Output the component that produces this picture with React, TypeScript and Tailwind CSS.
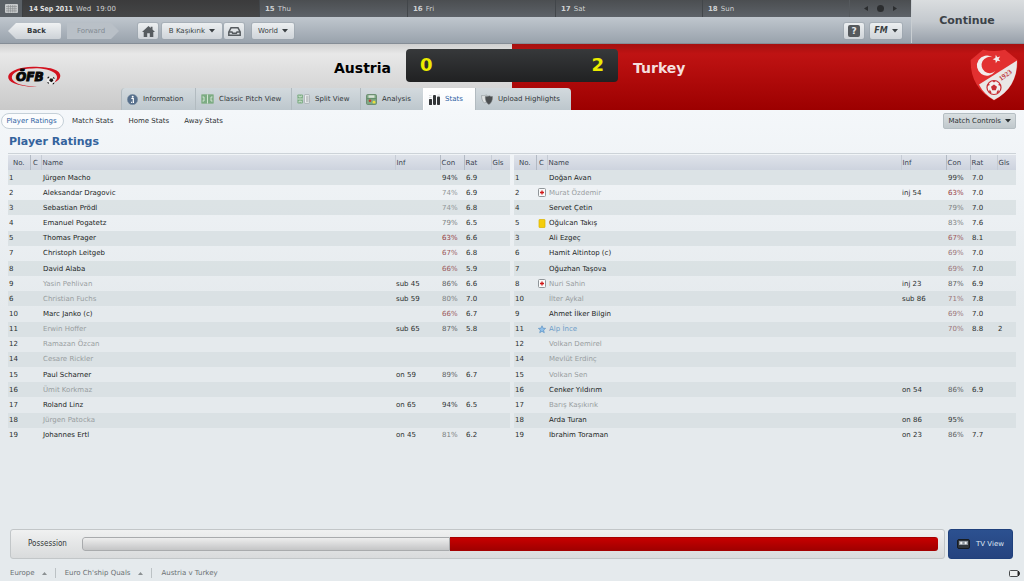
import React from 'react';

type Flag = 'injury' | 'yellow' | 'star';

interface Player {
  no: number;
  name: string;
  inf?: string;
  con?: number;
  rat?: string;
  gls?: number;
  flag?: Flag;
  off?: boolean;
}

const austria: Player[] = [
  { no: 1, name: 'Jürgen Macho', con: 94, rat: '6.9' },
  { no: 2, name: 'Aleksandar Dragovic', con: 74, rat: '6.9' },
  { no: 3, name: 'Sebastian Prödl', con: 74, rat: '6.8' },
  { no: 4, name: 'Emanuel Pogatetz', con: 79, rat: '6.5' },
  { no: 5, name: 'Thomas Prager', con: 63, rat: '6.6' },
  { no: 7, name: 'Christoph Leitgeb', con: 67, rat: '6.8' },
  { no: 8, name: 'David Alaba', con: 66, rat: '5.9' },
  { no: 9, name: 'Yasin Pehlivan', inf: 'sub 45', con: 86, rat: '6.6', off: true },
  { no: 6, name: 'Christian Fuchs', inf: 'sub 59', con: 80, rat: '7.0', off: true },
  { no: 10, name: 'Marc Janko (c)', con: 66, rat: '6.7' },
  { no: 11, name: 'Erwin Hoffer', inf: 'sub 65', con: 87, rat: '5.8', off: true },
  { no: 12, name: 'Ramazan Özcan', off: true },
  { no: 14, name: 'Cesare Rickler', off: true },
  { no: 15, name: 'Paul Scharner', inf: 'on 59', con: 89, rat: '6.7' },
  { no: 16, name: 'Ümit Korkmaz', off: true },
  { no: 17, name: 'Roland Linz', inf: 'on 65', con: 94, rat: '6.5' },
  { no: 18, name: 'Jürgen Patocka', off: true },
  { no: 19, name: 'Johannes Ertl', inf: 'on 45', con: 81, rat: '6.2' },
];

const turkey: Player[] = [
  { no: 1, name: 'Doğan Avan', con: 99, rat: '7.0' },
  { no: 2, name: 'Murat Özdemir', inf: 'inj 54', con: 63, rat: '7.0', flag: 'injury', off: true },
  { no: 4, name: 'Servet Çetin', con: 79, rat: '7.0' },
  { no: 5, name: 'Oğulcan Takış', con: 83, rat: '7.6', flag: 'yellow' },
  { no: 3, name: 'Ali Ezgeç', con: 67, rat: '8.1' },
  { no: 6, name: 'Hamit Altintop (c)', con: 69, rat: '7.0' },
  { no: 7, name: 'Oğuzhan Taşova', con: 69, rat: '7.0' },
  { no: 8, name: 'Nuri Sahin', inf: 'inj 23', con: 87, rat: '6.9', flag: 'injury', off: true },
  { no: 10, name: 'İlter Aykal', inf: 'sub 86', con: 71, rat: '7.8', off: true },
  { no: 9, name: 'Ahmet İlker Bilgin', con: 69, rat: '7.0' },
  { no: 11, name: 'Alp İnce', con: 70, rat: '8.8', gls: 2, flag: 'star' },
  { no: 12, name: 'Volkan Demirel', off: true },
  { no: 14, name: 'Mevlüt Erdinç', off: true },
  { no: 15, name: 'Volkan Sen', off: true },
  { no: 16, name: 'Cenker Yıldırım', inf: 'on 54', con: 86, rat: '6.9' },
  { no: 17, name: 'Barış Kaşıkırık', off: true },
  { no: 18, name: 'Arda Turan', inf: 'on 86', con: 95 },
  { no: 19, name: 'Ibrahim Toraman', inf: 'on 23', con: 86, rat: '7.7' },
];

const days = [
  { day: '15', name: 'Thu' },
  { day: '16', name: 'Fri' },
  { day: '17', name: 'Sat' },
  { day: '18', name: 'Sun' },
];

function conColor(con: number) {
  if (con >= 94) return 'text-[#333635]';
  if (con >= 84) return 'text-[#5c605f]';
  if (con >= 76) return 'text-[#7c8080]';
  if (con >= 74) return 'text-[#919595]';
  if (con >= 68) return 'text-[#9a7478]';
  if (con >= 65) return 'text-[#9b585c]';
  return 'text-[#963c42]';
}

function nameColor(player: Player) {
  if (player.flag === 'star') return 'text-[#6a9cc8]';
  return player.off ? 'text-[#989d9f]' : 'text-[#222524]';
}

function Caret() {
  return (
    <svg className="w-[6px] h-1" viewBox="0 0 6 4" fill="currentColor" aria-hidden="true">
      <path d="M0 0h6L3 3.500z" />
    </svg>
  );
}

function UpCaret() {
  return (
    <svg className="w-[5px] h-[3px]" viewBox="0 0 5 3" fill="#8b9092" aria-hidden="true">
      <path d="M0 3h5L2.500 0z" />
    </svg>
  );
}

function FlagIcon({ flag }: { flag: Flag }) {
  if (flag === 'injury') {
    return (
      <svg className="w-2 h-[9px]" viewBox="0 0 8 9" aria-label="Injured">
        <rect x=".5" y=".5" width="7" height="8" rx="1" fill="#fafafa" stroke="#8f9599" />
        <path d="M4 2.500v4M2 4.500h4" stroke="#d01818" strokeWidth="1.300" />
      </svg>
    );
  }
  if (flag === 'yellow') {
    return (
      <svg className="w-2 h-[9px]" viewBox="0 0 8 9" aria-label="Yellow card">
        <rect x="1" y=".5" width="6" height="8" rx=".5" fill="#f5cd0c" stroke="#d9b100" strokeWidth=".7" />
      </svg>
    );
  }
  return (
    <svg className="w-2 h-[9px]" viewBox="0 0 8 9" aria-label="Player of the match">
      <path d="M4 .8l1 2.400 2.600.2-2 1.700.7 2.600L4 6.300 1.700 7.700l.7-2.600-2-1.700L3 3.200z" fill="#8fc0ea" stroke="#4c86bd" strokeWidth=".6" />
    </svg>
  );
}

function AustriaLogo() {
  return (
    <svg className="w-[54px] h-[22px]" viewBox="0 0 54 22" aria-label="ÖFB">
      <path fillRule="evenodd" fill="#d3121f" d="M37 2.200C28-.2 14 .6 6 4.400-2 8.200-1.500 14 6 17.300c7 3 18 4.200 23 3.100-7 0-15-1-19.500-3C2 14 2 8.600 9 5.400 16 2.300 29 1.500 37 2.200z" />
      <path fill="#d3121f" d="M21 2.500c10-2.600 24-1.400 29 3 4.500 4.200 2 8.700-4 11 3-2.500 4.500-6 1-9.200C43 3.500 31 1.500 21 2.500z" />
      <text x="8" y="15" fontFamily="DejaVu Sans, sans-serif" fontSize="12" fontWeight="bold" fontStyle="oblique" fill="#080808" stroke="#080808" strokeWidth="1">ÖFB</text>
      <circle cx="43" cy="14.500" r="4" fill="#ececec" />
      <path d="M42 12.500h2.600l.8 2.200-2 1.500-2.200-1.400zM39.500 11l1.600-.5.2 1.300-1.600 1zM45.500 11l1.300 1.300-.8.800-1.200-1.300zM39.300 16l1.300.2.600 1.800-1.500-.8zM44.800 17.200l1.700-1-.5 1.700-1.400.6z" fill="#151515" />
    </svg>
  );
}

function TurkeyCrest() {
  return (
    <svg className="w-12 h-[52px]" viewBox="0 0 48 52" aria-label="Turkey 1923">
      <path d="M13 .8c7 1.600 15 1.600 22 0L47.500 11c.6 18-7.500 32-23.500 40.500C8 43 .2 29 .7 11z" fill="#e23030" />
      <path d="M47 11.500c.4 18-7.300 31.500-23 39.500C17.500 47.500 12.500 42.500 9 35.500z" fill="#e9e7e6" />
      <path d="M22.500 8.300a10 10 0 1 0 2.800 13.800 8.200 8.200 0 1 1-2.800-13.800z" fill="#f3eded" />
      <path d="M25.800 5.800l1.500 2.500 2.900-.8-1.700 2.500 1.900 2.300-2.900-.6-1.700 2.500-.3-3-2.900-.9 2.700-1.300z" fill="#f3eded" />
      <circle cx="24" cy="38.500" r="7" fill="#f2efee" stroke="#c82e34" strokeWidth="1.200" />
      <path d="M24 35.500l3 2.200-1.200 3.500h-3.600L21 37.700zM22 31.800h4L24 33.600zM17.300 37l.9-3 1.700 2zM30.700 37l-.9-3-1.700 2zM19 43.200l.7-2.800 1.800 2.800-.7 1.200zM29 43.200l-.7-2.800-1.800 2.800.7 1.200z" fill="#c82e34" />
      <text x="31" y="32" transform="rotate(-36 31 32)" fontFamily="Liberation Serif, serif" fontSize="7" fontWeight="bold" fill="#c03a40">1923</text>
    </svg>
  );
}

function InfoIcon() {
  return (
    <svg className="w-[11px] h-[11px]" viewBox="0 0 11 11" aria-hidden="true">
      <circle cx="5.500" cy="5.500" r="5.200" fill="#566f8c" stroke="#8496a8" strokeWidth=".5" />
      <circle cx="5.700" cy="2.700" r="1" fill="#fff" />
      <path d="M4.300 4.500h2v3.800h.7M4.100 8.300h1" stroke="#fff" strokeWidth="1.200" fill="none" />
    </svg>
  );
}

function PitchIcon() {
  return (
    <svg className="w-[13px] h-[10px]" viewBox="0 0 13 10" aria-hidden="true">
      <rect x=".4" y=".4" width="12.200" height="9.200" rx="1" fill="#7cac83" stroke="#90b596" strokeWidth=".8" />
      <path d="M6.500.5v9M1.500 3H3v4H1.500M11.500 3H10v4h1.500" stroke="#dcebdc" strokeWidth=".9" fill="none" />
    </svg>
  );
}

function SplitIcon() {
  return (
    <svg className="w-[13px] h-[10px]" viewBox="0 0 13 10" aria-hidden="true">
      <rect x=".4" y=".4" width="5.500" height="9.200" rx=".8" fill="#7cac83" />
      <path d="M.5 5h5.300M2 1.500v1.300h2.300V1.500M2 8.500V7.200h2.300v1.300" stroke="#dcebdc" strokeWidth=".9" fill="none" />
      <rect x="7.400" y=".7" width="5" height="8.600" rx=".8" fill="#eceff0" stroke="#9ca3a6" strokeWidth=".7" />
      <path d="M9 3h2.500M9 5h2.500M9 7h2.500" stroke="#858b8e" strokeWidth=".8" />
    </svg>
  );
}

function AnalysisIcon() {
  return (
    <svg className="w-[11px] h-[11px]" viewBox="0 0 11 11" aria-hidden="true">
      <rect x=".5" y=".5" width="10" height="10" rx="1.200" fill="#80a985" stroke="#6d8f73" />
      <rect x="2.500" y="1.300" width="6" height="2.500" fill="#d7e3d6" />
      <path d="M1 4.700h9" stroke="#5f8967" />
      <circle cx="4" cy="6.800" r="1.300" fill="#c3392f" />
      <circle cx="8" cy="8.200" r="1.400" fill="#eae03c" />
    </svg>
  );
}

function StatsIcon() {
  return (
    <svg className="w-[11px] h-[11px]" viewBox="0 0 11 11" fill="#333638" aria-hidden="true">
      <rect x="0" y="5" width="3" height="6" rx=".5" />
      <rect x="4" y="1" width="3" height="10" rx="1" />
      <rect x="8" y="2.500" width="3" height="8.500" rx=".8" />
      <path d="M0 1.500h2.500M0 3.500h2.500M8.500 1h2.500" stroke="#c9ccce" strokeWidth=".7" />
    </svg>
  );
}

function UploadIcon() {
  return (
    <svg className="w-3 h-[11px]" viewBox="0 0 12 11" aria-hidden="true">
      <path d="M.5 1.500C3 2 5 1 6 1v6.500L3.500 9C1.500 7.500.5 5 .5 1.500z" fill="#dfe2e3" stroke="#979da0" strokeWidth=".7" />
      <path d="M4.200 2.500c2 .5 4-.8 4-.8s1.800 1 3.300.8c.2 4-1.300 6.500-3.600 8C5.500 9 4.200 6.500 4.200 2.500z" fill="#4b4e50" stroke="#777c7e" strokeWidth=".5" />
    </svg>
  );
}

const tabs = [
  { label: 'Information', icon: <InfoIcon />, width: 'w-[74px]' },
  { label: 'Classic Pitch View', icon: <PitchIcon />, width: 'w-24' },
  { label: 'Split View', icon: <SplitIcon />, width: 'w-[69px]' },
  { label: 'Analysis', icon: <AnalysisIcon />, width: 'w-[63px]' },
  { label: 'Stats', icon: <StatsIcon />, width: 'w-[52px]', active: true },
  { label: 'Upload Highlights', icon: <UploadIcon />, width: 'w-24' },
];

function ToolButton({ children, className, label }: { children: React.ReactNode; className: string; label?: string }) {
  return (
    <button
      type="button"
      aria-label={label}
      className={`flex h-4 items-center justify-center gap-1 rounded-[2px] bg-linear-to-b from-[#eceff1] to-[#cfd4d9] text-[#3a3f43] ring-1 ring-[#98a1aa]/50 ${className}`}
    >
      {children}
    </button>
  );
}

function TopBar() {
  return (
    <header className="flex h-11 border-b border-[#858d96]">
      <div className="flex min-w-0 flex-1 flex-col">
        <div className="grid h-[17px] grid-cols-[23px_236fr_148fr_148fr_147fr_147fr_62px] bg-linear-to-b from-[#4b4e51] to-[#5d6268] text-[#cfd2d4]">
          <button type="button" aria-label="Calendar" className="flex items-center justify-center border-r border-[#3b3e41] bg-[#5a6066]">
            <svg className="w-[13px] h-[9px]" viewBox="0 0 13 9" aria-hidden="true">
              <rect width="13" height="9" rx="1" fill="#c6c9cb" />
              <path d="M1 2.500h11M1 4.700h11M1 6.900h11M3.300 1v7.500M5.500 1v7.500M7.700 1v7.500M9.900 1v7.500" stroke="#85898c" strokeWidth=".6" />
            </svg>
          </button>
          <div className="flex items-center gap-[3px] bg-linear-to-b from-[#3b3b3c] to-[#454647] pl-1.5">
            <b className="font-['DejaVu_Sans_Condensed','DejaVu_Sans',sans-serif] text-[#e3e3e3]">14 Sep 2011</b> Wed&nbsp; 19:00
          </div>
          {days.map((d) => (
            <div key={d.day} className="flex items-center gap-[3px] border-l border-[#42464a] pl-[5px]">
              <b>{d.day}</b> {d.name}
            </div>
          ))}
          <div className="flex items-center justify-center gap-[9px] border-l border-[#55595d]">
            <button type="button" aria-label="Previous day">
              <svg className="w-1 h-[5px]" viewBox="0 0 4 5" fill="#2b2d2f"><path d="M4 0v5L0 2.500z" /></svg>
            </button>
            <button type="button" aria-label="Today" className="h-[7px] w-[7px] rounded-full bg-[#2b2d2f]" />
            <button type="button" aria-label="Next day">
              <svg className="w-1 h-[5px]" viewBox="0 0 4 5" fill="#2b2d2f"><path d="M0 0v5l4-2.500z" /></svg>
            </button>
          </div>
        </div>
        <nav className="flex flex-1 items-center bg-linear-to-b from-[#c0c7ce] to-[#99a2ac] pt-0.5 pl-2 pr-2">
          <button type="button" className="h-4 w-[53px] rounded-r-[2px] bg-linear-to-b from-[#f0f2f3] to-[#cdd2d7] pl-1 font-bold text-[#33383c] [clip-path:polygon(0_50%,8px_0,100%_0,100%_100%,8px_100%)]">
            Back
          </button>
          <button type="button" disabled className="ml-1.5 h-4 w-[52px] bg-[#b9c0c7] pr-1 text-[#838b93] [clip-path:polygon(0_0,44px_0,100%_50%,44px_100%,0_100%)]">
            Forward
          </button>
          <ToolButton className="ml-[19px] w-5" label="Home">
            <svg className="w-[13px] h-[11px]" viewBox="0 0 13 11" fill="#575c60"><path d="M6.500 0l2.200 2V.8h1.800v2.800L13 6h-1.700v5H7.800V7.300H5.200V11H1.700V6H0z" /></svg>
          </ToolButton>
          <ToolButton className="ml-1 w-[60px]">B Kaşıkırık <Caret /></ToolButton>
          <ToolButton className="ml-[2px] w-5" label="Inbox">
            <svg className="w-[13px] h-[9px]" viewBox="0 0 13 9" fill="none" stroke="#565b5f" strokeWidth="1.500"><path d="M.8 5L3 .8h7L12.200 5v3.200H.8zM1 5h3l.7 1.200h3.600L9 5h3" /></svg>
          </ToolButton>
          <ToolButton className="ml-2 w-[42px]">World <Caret /></ToolButton>
          <ToolButton className="ml-auto w-5" label="Help">
            <span className="flex h-3 w-3 items-center justify-center rounded-[2px] bg-[#55595d] text-[9px] font-bold text-[#e6e8ea]">?</span>
          </ToolButton>
          <ToolButton className="ml-[6px] mr-px w-8">
            <b className="text-[8px] font-black italic">FM</b> <Caret />
          </ToolButton>
        </nav>
      </div>
      <button type="button" className="w-[113px] border-l border-[#c9ced2] bg-linear-to-b from-[#dadddf] via-[#c4c9ce] to-[#98a0aa] pr-[2px] pb-[2px] text-[11px] font-bold text-[#3c4248]">
        Continue
      </button>
    </header>
  );
}

function Scoreboard() {
  return (
    <section className="flex bg-[linear-gradient(#cfcfcf,#e8e8e8_15%,#c9c9c9),linear-gradient(#a51010,#bf1313_15%,#9c0000)] bg-[size:50%_100%] bg-[position:0_0,100%_0] bg-no-repeat">
      <div className="flex w-[121px] items-center pl-2"><AustriaLogo /></div>
      <div className="min-w-0 flex-1 pt-[5px]">
        <div className="grid grid-cols-[1fr_212px_1fr] items-center gap-[15px] text-[14px] font-bold">
          <h2 className="pt-1 text-right text-black">Austria</h2>
          <div className="flex h-[33px] justify-between rounded-[4px] bg-linear-to-b from-[#37393b] to-[#202122] px-[14px] text-[18px] leading-[31px] text-[#ebeb00]">
            <span>0</span>
            <span>2</span>
          </div>
          <h2 className="pt-1 text-[#f5dede]">Turkey</h2>
        </div>
        <nav className="mt-1.5 flex h-[22px]">
          {tabs.map((tab) => (
            <button
              key={tab.label}
              type="button"
              className={`flex shrink-0 items-center gap-[5px] border-l pl-[5px] whitespace-nowrap first:rounded-tl-[4px] last:rounded-tr-[4px] ${tab.width} ${
                tab.active
                  ? 'border-white bg-linear-to-b from-white to-[#f5f8fa] text-[#2d62a3]'
                  : 'border-[#b2bbc0] bg-linear-to-b from-[#d3dade] to-[#bdc7cd] text-[#303638]'
              }`}
            >
              {tab.icon}
              {tab.label}
            </button>
          ))}
        </nav>
      </div>
      <div className="flex w-[121px] justify-end pt-[5px] pr-[6px]"><TurkeyCrest /></div>
    </section>
  );
}

function RatingsTable({ team, players }: { team: string; players: Player[] }) {
  return (
    <table aria-label={team} className="h-[288px] w-full table-fixed border-collapse text-left text-[#2b2f2e]">
      <colgroup>
        <col className="w-[22px]" />
        <col className="w-[11px]" />
        <col />
        <col className="w-[45px]" />
        <col className="w-6" />
        <col className="w-[27px]" />
        <col className="w-[19px]" />
      </colgroup>
      <thead>
        <tr className="h-[15px] bg-linear-to-b from-[#dfe3ea] to-[#cdd3de] text-[#3b4450] *:p-0 *:font-normal">
          <th className="text-center">No.</th>
          <th className="border-l border-[#b3bac4] text-center">C</th>
          <th className="border-l border-[#c6ccd5]"><span className="pl-px">Name</span></th>
          <th className="border-l border-[#c6ccd5]"><span className="pl-px">Inf</span></th>
          <th className="border-l border-[#b3bac4]"><span className="pl-px">Con</span></th>
          <th className="border-l border-[#b3bac4]"><span className="pl-px">Rat</span></th>
          <th className="border-l border-[#c6ccd5]"><span className="pl-px">Gls</span></th>
        </tr>
      </thead>
      <tbody>
        {players.map((p) => (
          <tr key={p.no} className="h-[15px] odd:bg-[#d6dde0]/75 *:p-0">
            <td><span className="pl-px">{p.no}</span></td>
            <td><span className="flex justify-center">{p.flag && <FlagIcon flag={p.flag} />}</span></td>
            <td className={nameColor(p)}><span className="pl-[2px]">{p.name}</span></td>
            <td><span className="pl-px">{p.inf}</span></td>
            <td className={p.con ? conColor(p.con) : ''}><span className="pl-[2px]">{p.con && `${p.con}%`}</span></td>
            <td><span className="pl-[2px]">{p.rat}</span></td>
            <td><span className="pl-px">{p.gls}</span></td>
          </tr>
        ))}
      </tbody>
    </table>
  );
}

function PossessionBar({ home }: { home: number }) {
  return (
    <div className="flex h-[30px] flex-1 items-center rounded-[3px] border border-[#c2c6c8] bg-linear-to-b from-[#f0f1f1] to-[#d9dbdc] pr-[6px] pl-[17px]">
      <span className="w-[54px] font-['DejaVu_Sans_Condensed','DejaVu_Sans',sans-serif] text-[8px] text-[#333838]">Possession</span>
      <div className="flex h-[14px] flex-1 overflow-hidden rounded-[3px]">
        <div className="rounded-l-[3px] border border-[#a9abad] bg-linear-to-b from-[#eeeeee] to-[#c4c5c6]" style={{ width: `${home}%` }} />
        <div className="flex-1 border-y border-[#a50000] bg-linear-to-b from-[#c70000] to-[#a00000]" />
      </div>
    </div>
  );
}

export default function App() {
  return (
    <div className="flex min-h-screen flex-col bg-[#e5eaed] bg-[linear-gradient(#f4f7fa_110px,#e5eaed_310px)] font-['DejaVu_Sans','Liberation_Sans',sans-serif] text-[7px] leading-[10px]">
      <TopBar />
      <Scoreboard />

      <nav className="flex items-center pt-[3px] pr-2 pl-px text-[#2b3032]">
        <button type="button" className="h-4 w-[63px] rounded-full border border-[#c5d0d8] bg-[#fbfcfd] pr-[2px] text-[#2d62a3]">Player Ratings</button>
        <div className="flex flex-1 gap-[15px] pl-2">
          <button type="button">Match Stats</button>
          <button type="button">Home Stats</button>
          <button type="button">Away Stats</button>
        </div>
        <button type="button" className="flex h-4 items-center gap-1 rounded-[2px] border border-[#b5bec3] bg-linear-to-b from-[#d9dfe1] to-[#c0c8cc] px-[4px]">
          Match Controls <Caret />
        </button>
      </nav>

      <main className="px-2">
        <h1 className="pt-[5px] pl-px text-[11px] leading-4 font-bold text-[#34639d]">Player Ratings</h1>
        <div className="mt-[3px] grid grid-cols-2 gap-x-1 border-t border-[#cdd3d8] pt-px">
          <RatingsTable team="Austria" players={austria} />
          <RatingsTable team="Turkey" players={turkey} />
        </div>
      </main>

      <section className="mt-auto flex gap-[3px] pr-[11px] pl-[10px]">
        <PossessionBar home={43} />
        <button type="button" className="flex h-[30px] w-[65px] items-center justify-center gap-[6px] rounded-[3px] border border-[#1f407c] bg-linear-to-b from-[#2c5190] to-[#25437f] text-[#dfe6f1]">
          <svg className="w-[13px] h-[10px]" viewBox="0 0 13 10" aria-hidden="true">
            <rect x=".5" y=".5" width="12" height="9" rx="1.500" fill="#31363c" stroke="#171b20" />
            <rect x="2" y="2" width="9" height="4" fill="#8f969d" />
            <path d="M3 4h2.500M4.200 2.800v2.400M7.500 4H10M8.700 2.800v2.400" stroke="#fff" />
          </svg>
          TV View
        </button>
      </section>

      <footer className="flex h-[22px] items-center pt-2 pr-1 pb-[2px] pl-[10px] text-[#6a7073]">
        <a href="#europe" className="flex items-center gap-[7px] border-r border-[#bcc2c5] pr-2">Europe <UpCaret /></a>
        <a href="#quals" className="ml-[9px] flex items-center gap-[7px] border-r border-[#bcc2c5] pr-2">Euro Ch'ship Quals <UpCaret /></a>
        <a href="#match" className="ml-[10px]">Austria v Turkey</a>
        <svg className="ml-auto w-[11px] h-[7px]" viewBox="0 0 11 7" aria-hidden="true">
          <rect x=".5" y=".5" width="8.500" height="6" rx="1" fill="#eef0f0" stroke="#484b4d" />
          <path d="M9.500 1v5M10.300 2.200v2.600" stroke="#222" strokeWidth="1.200" />
        </svg>
      </footer>
    </div>
  );
}
